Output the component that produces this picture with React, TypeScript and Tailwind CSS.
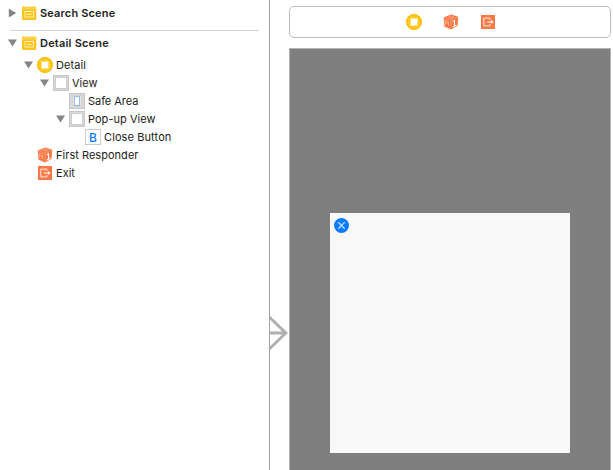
import type { ReactNode } from "react";

function SceneIcon() {
  return (
    <svg width="16" height="16" viewBox="0 0 16 16" className="block">
      <path d="M1 4.5H15.3V14a1 1 0 0 1-1 1H2a1 1 0 0 1-1-1Z" fill="#fcc41c" />
      <path d="M1 5V2.2L2.2 1 3.4 2.2 4.6 1 5.8 2.2 7 1 8.2 2.2 9.4 1 10.6 2.2 11.8 1 13 2.2 14.2 1 15.3 2.2V5Z" fill="#fcc82c" />
      <path d="M1.8 4 3.4 2.6M4.2 4 5.8 2.6M6.6 4 8.2 2.6M9 4 10.6 2.6M11.4 4 13 2.6M13.6 4 15 2.8" fill="none" stroke="#fdeaa8" strokeWidth="0.7" />
      <rect x="4" y="6.5" width="8.5" height="5.5" fill="#fcc41c" stroke="#fff0bc" strokeWidth="1" />
      <path d="M6 9.5h4.5" stroke="#fff3c4" strokeWidth="1" />
    </svg>
  );
}

function ControllerIcon() {
  return (
    <svg width="16" height="16" viewBox="0 0 16 16" className="block">
      <circle cx="8" cy="8" r="8" fill="#fecb1e" />
      <circle cx="8" cy="8" r="7.3" fill="none" stroke="#f7bb0c" strokeWidth="1" />
      <rect x="4.6" y="4.6" width="6.8" height="6.8" fill="#fff" stroke="#fee28a" strokeWidth="0.8" />
    </svg>
  );
}

function ViewIcon() {
  return (
    <svg width="16" height="16" viewBox="0 0 16 16" className="block">
      <rect x="0.5" y="0.5" width="15" height="15" fill="#dadada" stroke="#c6c6c6" />
      <rect x="2.5" y="2.5" width="11" height="11" fill="#fff" stroke="#cccccc" />
    </svg>
  );
}

function SafeAreaIcon() {
  return (
    <svg width="16" height="16" viewBox="0 0 16 16" className="block">
      <rect x="0.5" y="0.5" width="15" height="15" fill="#d8d8d8" stroke="#c6c6c6" />
      <rect x="3.5" y="2.5" width="9" height="11" fill="#e6e6e6" stroke="#d2d2d2" />
      <rect x="5.5" y="3.5" width="5" height="9" fill="#fff" stroke="#93bfe6" />
    </svg>
  );
}

function ButtonIcon() {
  return (
    <span className="flex h-4 w-4 items-center justify-center border border-[#cbcbcb] bg-white pt-px text-[12px] font-medium leading-none text-[#0a7bff]">
      B
    </span>
  );
}

function ResponderIcon() {
  return (
    <svg width="16" height="16" viewBox="0 0 16 16" className="block">
      <path d="M8.3 0.4 15.2 2.8 14.6 11.9 8 15.6 1.4 12.4 0.7 3.6Z" fill="#fa7946" />
      <path d="M1 4 7.9 5.8 14.9 3.2M7.9 5.8 8 15" fill="none" stroke="#fca482" strokeWidth="0.6" />
      <path d="M9.7 7.9 11.5 6.8V12.3M9.7 12.9 13.4 11.3" fill="none" stroke="#fff" strokeWidth="1.1" />
      <path d="M2.4 6.4V10.4M3.9 9.6C4 7.2 5.8 7.4 5.6 8.8V11.8M2.4 6.4 4 6.8" fill="none" stroke="#fdc5ae" strokeWidth="0.8" />
      <path d="M5.6 3.2 8.2 2 10.4 3 8 4Z" fill="none" stroke="#fcb395" strokeWidth="0.6" />
    </svg>
  );
}

function ExitIcon() {
  return (
    <svg width="14" height="14" viewBox="0 0 14 14" className="block">
      <rect width="14" height="14" fill="#fa7946" />
      <path d="M8.9 4.9V3.1H2.8v7.8h6.1V9.1" fill="none" stroke="#ffeee6" strokeWidth="1" />
      <path d="M5.8 7H11" stroke="#fff" strokeWidth="1" />
      <path d="M10.1 4.9 12.5 7 10.1 9.1Z" fill="#fff" />
    </svg>
  );
}

function Triangle({ open }: { open: boolean }) {
  return (
    <svg width="10" height="10" viewBox="0 0 10 10" className="block">
      <path d={open ? "M0 1.6H9L4.5 8.6Z" : "M0.8 0.6V9.6L8.2 5.1Z"} fill="#858585" />
    </svg>
  );
}

type RowProps = {
  indent?: string;
  arrow?: "open" | "closed";
  icon: ReactNode;
  label: string;
  text?: string;
};

function Row({ indent = "pl-2", arrow, icon, label, text = "tracking-[0.03px]" }: RowProps) {
  return (
    <div className={`flex h-[18px] items-center ${indent}`}>
      <span className="w-[13px] shrink-0">{arrow && <Triangle open={arrow === "open"} />}</span>
      <span className="flex w-4 shrink-0 justify-center">{icon}</span>
      <span className={`ml-[3px] whitespace-nowrap leading-[18px] ${text}`}>{label}</span>
    </div>
  );
}

export default function App() {
  return (
    <div className="flex h-[470px] w-[613px] overflow-hidden bg-white font-['Inter',sans-serif] text-[11px] text-[#222]">
      <aside className="w-[270px] shrink-0 border-r border-[#a3a3a3] pt-1">
        <Row arrow="closed" icon={<SceneIcon />} label="Search Scene" text="font-semibold tracking-[0.16px]" />
        <div className="ml-2.5 mr-2.5 mt-2 h-px bg-[#d4d4d4]" />
        <div className="pt-[3px]">
          <Row arrow="open" icon={<SceneIcon />} label="Detail Scene" text="font-semibold tracking-[0.2px]" />
        </div>
        <div className="pt-1">
          <Row indent="pl-6" arrow="open" icon={<ControllerIcon />} label="Detail" text="tracking-[0.1px]" />
          <Row indent="pl-10" arrow="open" icon={<ViewIcon />} label="View" />
          <Row indent="pl-14" icon={<SafeAreaIcon />} label="Safe Area" text="tracking-[-0.05px]" />
          <Row indent="pl-14" arrow="open" icon={<ViewIcon />} label="Pop-up View" />
          <Row indent="pl-[72px]" icon={<ButtonIcon />} label="Close Button" text="tracking-[0.1px]" />
          <Row indent="pl-6" icon={<ResponderIcon />} label="First Responder" />
          <Row indent="pl-6" icon={<ExitIcon />} label="Exit" />
        </div>
      </aside>
      <main className="flex min-w-0 flex-1">
        <div className="w-[19px] shrink-0 pt-[316px]">
          <svg width="19" height="34" viewBox="0 0 19 34" className="block">
            <path d="M-1 0.8 15.8 17 -1 33.2M-1 17H15.5" fill="none" stroke="#b0b0b0" strokeWidth="3" />
          </svg>
        </div>
        <div className="flex w-[322px] shrink-0 flex-col pt-1.5">
          <div className="flex h-8 items-center justify-center rounded-[5px] border border-[#bcbcbc]">
            <ControllerIcon />
            <span className="ml-[21px] mr-[22px]">
              <ResponderIcon />
            </span>
            <ExitIcon />
          </div>
          <div className="mt-2.5 flex-1 border border-b-0 border-[#b5b5b5] bg-[#7f7f7f] pl-10 pt-[164px]">
            <div className="h-60 w-60 bg-[#f8f8f8] pl-1 pt-[5px]">
              <svg width="15" height="15" viewBox="0 0 15 15" className="block">
                <circle cx="7.5" cy="7.5" r="7.5" fill="#087bff" />
                <path d="M4.3 4.3 10.7 10.7M10.7 4.3 4.3 10.7" stroke="#b9d9ff" strokeWidth="1.4" />
              </svg>
            </div>
          </div>
        </div>
      </main>
    </div>
  );
}
